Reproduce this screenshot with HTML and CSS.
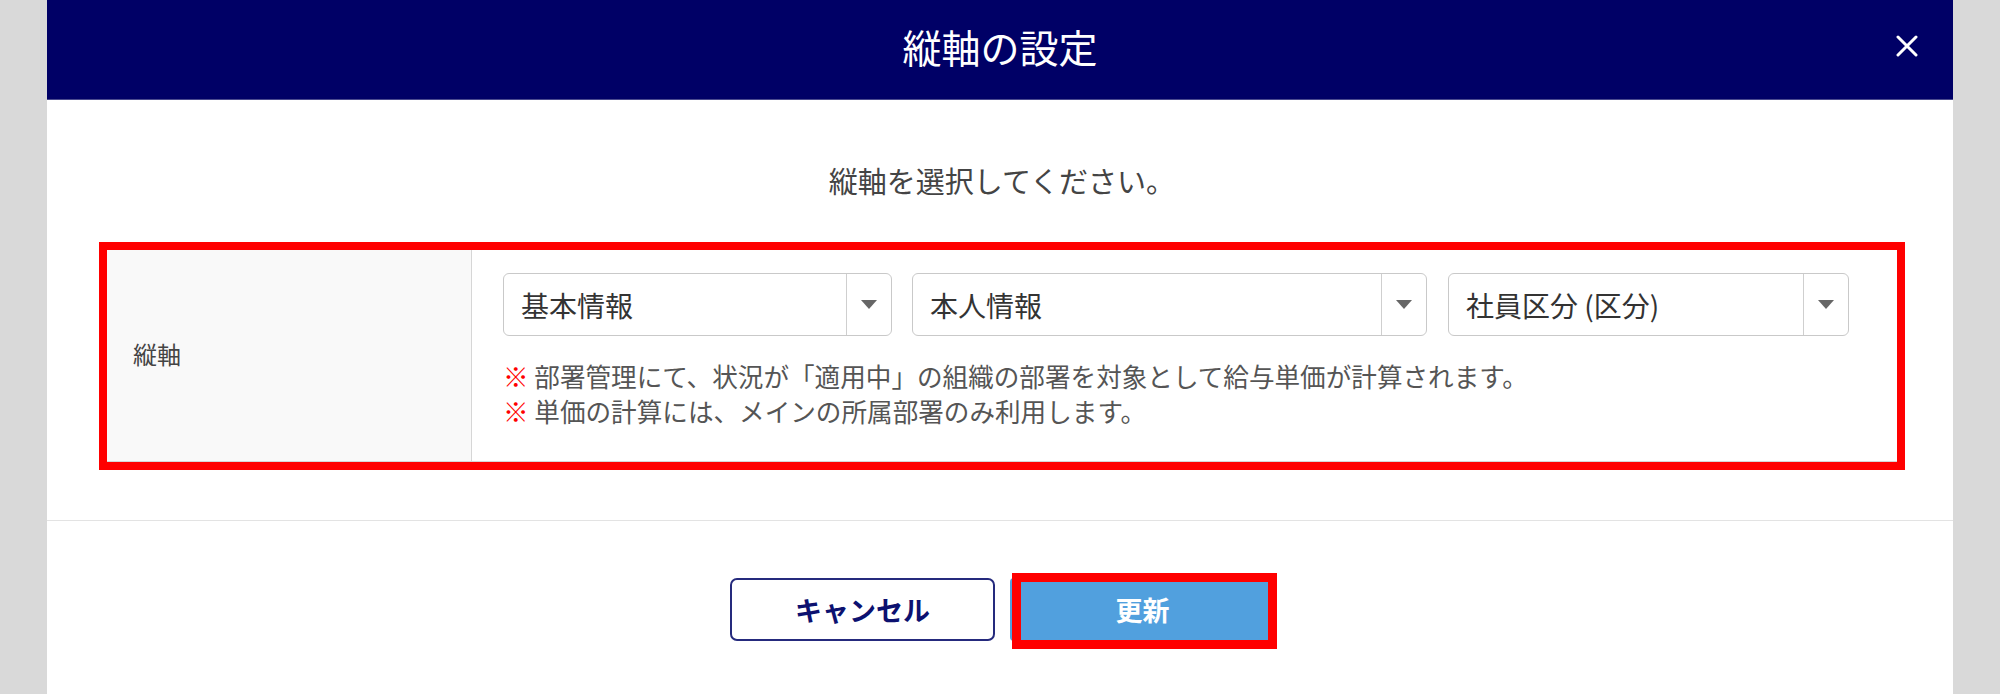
FILE: index.html
```html
<!DOCTYPE html>
<html lang="ja">
<head>
<meta charset="utf-8">
<title>縦軸の設定</title>
<link rel="stylesheet" href="styles.css">
</head>
<body>
<div class="modal">
  <header class="modal-header">
    <span class="header-spacer"></span>
    <h1 class="modal-title">縦軸の設定</h1>
    <button class="close-btn" type="button" aria-label="閉じる">
      <svg width="22" height="22" viewBox="0 0 22 22"><path d="M2 2 L20 20 M20 2 L2 20" stroke="#fff" stroke-width="3" stroke-linecap="round"/></svg>
    </button>
  </header>
  <div class="modal-body">
    <p class="lead">縦軸を選択してください。</p>
    <div class="highlight">
      <div class="form-row">
        <div class="label-cell">縦軸</div>
        <div class="field-cell">
          <div class="selects">
            <div class="select sel-a"><span class="select-value">基本情報</span><span class="select-caret"><span class="caret"></span></span></div>
            <div class="select sel-b"><span class="select-value">本人情報</span><span class="select-caret"><span class="caret"></span></span></div>
            <div class="select sel-c"><span class="select-value">社員区分 (区分)</span><span class="select-caret"><span class="caret"></span></span></div>
          </div>
          <ul class="notes">
            <li><span class="mark">※</span> 部署管理にて、状況が「適用中」の組織の部署を対象として給与単価が計算されます。</li>
            <li><span class="mark">※</span> 単価の計算には、メインの所属部署のみ利用します。</li>
          </ul>
        </div>
      </div>
    </div>
  </div>
  <div class="modal-footer">
    <button class="btn btn-cancel" type="button">キャンセル</button>
    <span class="annot"><button class="btn btn-primary" type="button">更新</button></span>
  </div>
</div>
</body>
</html>
```

FILE: styles.css
```css
html, body {
  margin: 0;
  padding: 0;
}
body {
  background: #d9d9d9;
  font-family: "Noto Sans CJK JP", "Noto Sans", sans-serif;
  color: #333;
}
.modal {
  width: 1906px;
  height: 694px;
  margin: 0 auto;
  background: #fff;
  overflow: hidden;
}
.modal-header {
  box-sizing: border-box;
  height: 100px;
  padding: 0 35px 7px 35px;
  background: #000066;
  border-bottom: 1px solid #4a4a8e;
  display: grid;
  grid-template-columns: 1fr auto 1fr;
  align-items: center;
}
.modal-title {
  margin: 0;
  font-size: 39px;
  font-weight: 400;
  color: #fff;
  line-height: 50px;
}
.close-btn {
  justify-self: end;
  width: 22px;
  height: 22px;
  padding: 0;
  border: 0;
  background: transparent;
  display: flex;
}
.modal-body {
  padding: 60px 48px 50px 52px;
  border-bottom: 1px solid #e3e3e3;
}
.lead {
  margin: 0 0 42px;
  text-align: center;
  font-size: 29px;
  line-height: 40px;
  color: #444;
}
.highlight {
  border: 8px solid #ff0000;
}
.form-row {
  display: flex;
  min-height: 211px;
  border-bottom: 1px solid #d6d6d6;
}
.label-cell {
  width: 365px;
  flex: none;
  box-sizing: border-box;
  padding-left: 26px;
  padding-bottom: 4px;
  background: #f9f9f9;
  border-right: 1px solid #d6d6d6;
  display: flex;
  align-items: center;
  font-size: 24px;
  color: #444;
}
.field-cell {
  flex: 1;
  padding: 23px 0 0 31px;
}
.selects {
  display: flex;
  gap: 20px;
}
.select {
  height: 63px;
  box-sizing: border-box;
  border: 1px solid #c9c9c9;
  border-radius: 6px;
  display: flex;
  align-items: stretch;
  background: #fff;
}
.sel-a { width: 389px; }
.sel-b { width: 515px; }
.sel-c { width: 401px; margin-left: 1px; }
.select-value {
  flex: 1;
  display: flex;
  align-items: center;
  padding-left: 17px;
  font-size: 28px;
  color: #333;
  white-space: nowrap;
}
.select-caret {
  width: 44px;
  flex: none;
  border-left: 1px solid #cfcfcf;
  display: flex;
  align-items: center;
  justify-content: center;
}
.caret {
  width: 0;
  height: 0;
  border-left: 8px solid transparent;
  border-right: 8px solid transparent;
  border-top: 9px solid #666;
}
.notes {
  list-style: none;
  margin: 22px 0 0;
  padding: 0;
  font-size: 25.6px;
  line-height: 35px;
  color: #555;
}
.mark {
  color: #ff0000;
  font-weight: 700;
}
.modal-footer {
  display: flex;
  justify-content: center;
  gap: 15px;
  padding: 57px 0 0 5px;
}
.btn {
  width: 265px;
  height: 63px;
  box-sizing: border-box;
  font-family: "Noto Sans CJK JP", "Noto Sans", sans-serif;
  font-size: 27px;
  font-weight: 700;
  cursor: pointer;
}
.btn-cancel {
  background: #fff;
  border: 2px solid #252a7d;
  border-radius: 7px;
  color: #0c1170;
}
.annot {
  position: relative;
  display: inline-flex;
}
.annot::after {
  content: "";
  position: absolute;
  top: -5px;
  right: -2px;
  bottom: -8px;
  left: 2px;
  border: 9px solid #ff0000;
  pointer-events: none;
}
.btn-primary {
  background: #51a0de;
  border: 0;
  border-radius: 4px;
  color: #fff;
}
```
